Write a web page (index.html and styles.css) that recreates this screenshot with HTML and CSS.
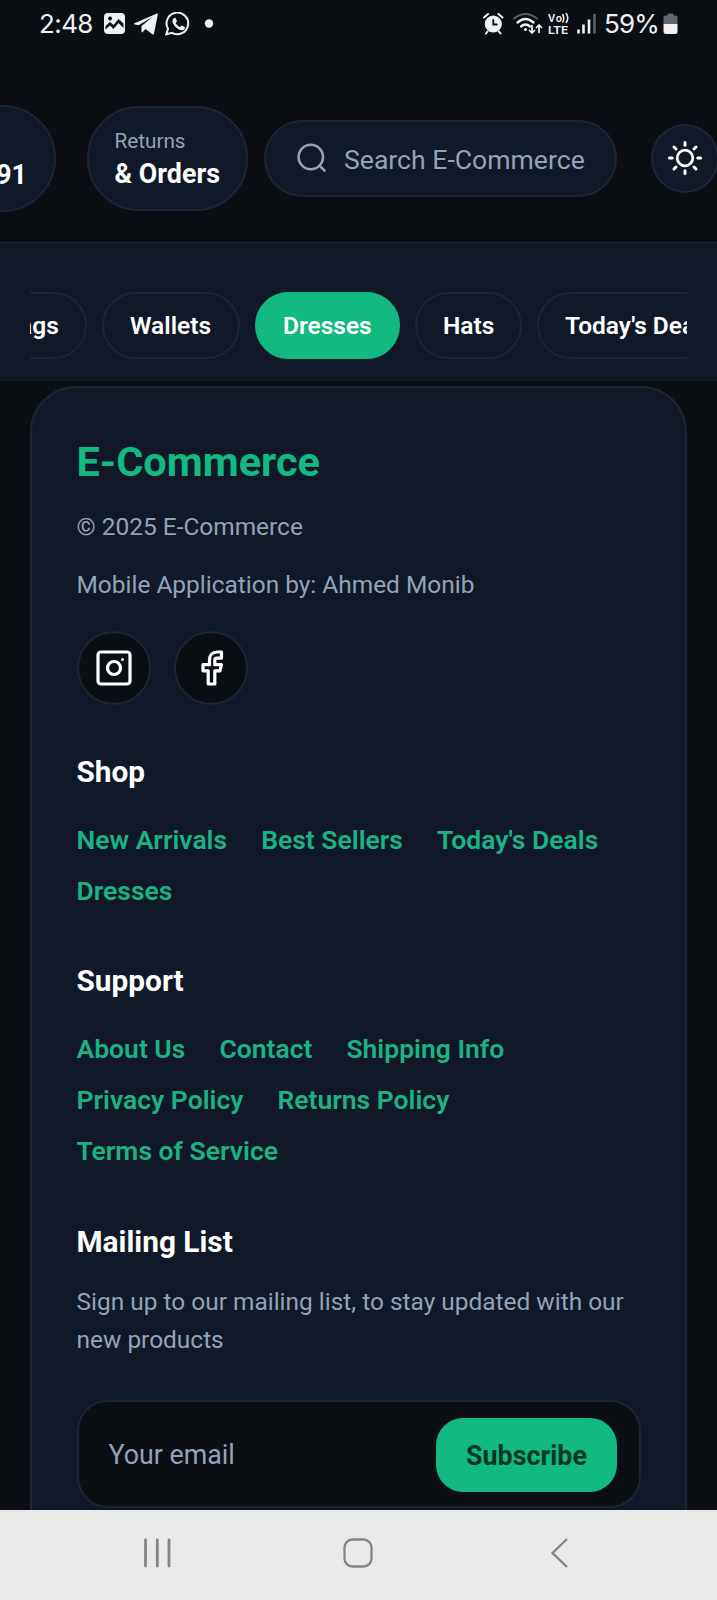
FILE: index.html
```html
<!DOCTYPE html>
<html lang="en">
<head>
<meta charset="utf-8">
<title>E-Commerce</title>
<link rel="stylesheet" href="styles.css">
</head>
<body>
<div class="screen">
  <div class="status">
    <span class="clock">2:48</span>
    <svg class="status-left" width="112" height="26" viewBox="0 0 112 26">
      <path fill="#f0f1f3" fill-rule="evenodd" d="M4 1h13a4 4 0 0 1 4 4v13a4 4 0 0 1-4 4H4a4 4 0 0 1-4-4V5a4 4 0 0 1 4-4ZM1.500 17.500 6 13.500l3.500 3.500 5-6 5 5v-4.500L14.500 7l-5 6L6 10l-4.500 4ZM6 4.500a2 2 0 1 0 .1 0Z"/>
      <path fill="#f0f1f3" d="M30 11.500 53 1.500q1-.3.800 1L50 21.500q-.4 1.500-1.800.700L41.500 17l-3.200 3.500-.8-.6V14L48.500 5 34.500 13.200 30 12.200Z"/>
      <path fill="none" stroke="#f0f1f3" stroke-width="2" d="M62.300 22.300 64 16.800a10.800 10.800 0 1 1 4 4Z"/>
      <path fill="#f0f1f3" d="M69.500 6.500c1-1 2-.8 2.400.2l1 2.400c.1.800-1 1.500-1.200 2 .8 1.800 2.200 3.100 4.200 4 .7-.2 1.300-1.700 2.100-1.500l2.700 1.300c.6 1.500-.7 3.100-2.400 3.400-3.200.6-9.500-4.500-9.800-8.700-.1-1.300.3-2.300 1-3.100Z"/>
      <circle cx="105" cy="11.500" r="4.200" fill="#f0f1f3"/>
    </svg>
    <svg class="status-right" width="114" height="26" viewBox="0 0 114 26">
      <g fill="none" stroke="#f0f1f3" stroke-width="2" stroke-linecap="round">
        <path d="M1 5.500 5 2M15.500 2l4 3.500M4.500 19.500 3 21.500M16 19.500l1.500 2"/>
        <circle cx="10.300" cy="12" r="7.600" fill="#f0f1f3"/>
        <path d="M10.300 8v4.500h3.500" stroke="#0b0e14" stroke-width="1.800"/>
        <path d="M31 6.500Q42.500-2.500 54 6.500" stroke="#5c6066"/>
        <path d="M34.500 10.500q8-7 16 0M38 14.500q4.500-3.800 9 0" stroke-width="2.400"/>
        <path d="M42.500 17.500v.1" stroke-width="3"/>
        <path d="M49 13.500v7M46.500 18.500l2.500 2.500 2.500-2.500M56 20.500v-7M53.500 15.500 56 13l2.500 2.500" stroke-width="1.700"/>
      </g>
      <text class="volte" x="65" y="9.800" textLength="14">Vo</text>
      <path d="M79.500 2q2.500 4.300 0 8.600M83 1q3.500 5 0 10" fill="none" stroke="#f0f1f3" stroke-width="1.500"/>
      <text class="volte" x="65" y="21.500" textLength="20" lengthAdjust="spacingAndGlyphs">LTE</text>
      <path d="M95.500 17.500v4M100.500 12.500v9M106 7.500v14" stroke="#f0f1f3" stroke-width="2.600"/>
      <path d="M111.500 2v19.500" stroke="#5c6066" stroke-width="2.600"/>
    </svg>
    <span class="battery">59%</span>
    <svg class="battery-icon" width="15" height="22" viewBox="0 0 15 22">
      <path fill="#63666b" d="M4.500 2.500v-1q0-1 1-1h4q1 0 1 1v1h2q2 0 2 2V11H.5V4.500q0-2 2-2Z"/>
      <path fill="#f0f1f3" d="M.5 11h14v7.500q0 2.500-2.500 2.500H3Q.5 21 .5 18.500Z"/>
    </svg>
  </div>

  <header class="header">
    <div class="pill deliver"><span class="small">&nbsp;</span><strong class="strong">91</strong></div>
    <div class="pill returns"><span class="small">Returns</span><strong class="strong">&amp; Orders</strong></div>
    <div class="search">
      <svg width="32" height="32" viewBox="0 0 32 32" fill="none" stroke="#94a3b8" stroke-width="2.600" stroke-linecap="round"><circle cx="14.800" cy="15" r="12.200"/><path d="m23.700 23.900 4.800 4.600"/></svg>
      <span>Search E-Commerce</span>
    </div>
    <div class="theme">
      <svg width="36" height="36" viewBox="0 0 36 36" fill="none" stroke="#fff" stroke-width="3" stroke-linecap="round"><circle cx="18" cy="18" r="7.800" stroke-width="2.700"/><path d="M18 2.400v2.800M18 30.800v2.800M2.400 18h2.800M30.800 18h2.800M7 7l2 2M27 27l2 2M7 29l2-2M27 9l2-2"/></svg>
    </div>
  </header>

  <nav class="categories">
    <div class="track">
      <a class="chip bags">Bags</a>
      <a class="chip wallets">Wallets</a>
      <a class="chip active">Dresses</a>
      <a class="chip hats">Hats</a>
      <a class="chip deals">Today's Deals</a>
    </div>
  </nav>

  <main class="card">
    <h1 class="brand">E-Commerce</h1>
    <p class="muted">© 2025 E-Commerce</p>
    <p class="muted author">Mobile Application by: Ahmed Monib</p>
    <div class="socials">
      <a class="social"><svg width="38" height="38" viewBox="0 0 38 38" fill="none" stroke="#fff" stroke-width="3.200"><rect x="3" y="3" width="32" height="32" rx="3"/><circle cx="19" cy="19" r="6.500"/><circle cx="27.500" cy="10.500" r="1.500" fill="#fff" stroke="none"/></svg></a>
      <a class="social"><svg width="38" height="38" viewBox="0 0 38 38" fill="none" stroke="#fff" stroke-width="3.200" stroke-linejoin="round"><path d="M29.500 3h-4.300c-4.500 0-7.700 3.200-7.700 7.700v5H11v6.100h5.200V35h6.600V21.800h5.100l1.600-6.100h-6.700v-4.500c0-1.300.8-2.100 2.100-2.100h4.600Z"/></svg></a>
    </div>

    <h2 class="heading">Shop</h2>
    <div class="links">
      <a>New Arrivals</a><a>Best Sellers</a><a>Today's Deals</a><a>Dresses</a>
    </div>

    <h2 class="heading">Support</h2>
    <div class="links">
      <a>About Us</a><a>Contact</a><a>Shipping Info</a><a>Privacy Policy</a><a>Returns Policy</a><a>Terms of Service</a>
    </div>

    <h2 class="heading mailing">Mailing List</h2>
    <p class="muted signup">Sign up to our mailing list, to stay updated with our new products</p>
    <div class="field"><span>Your email</span><button class="subscribe">Subscribe</button></div>
  </main>

  <div class="sysnav">
    <svg width="30" height="30" viewBox="0 0 30 30" stroke="#858585" stroke-width="2.800" stroke-linecap="round"><path d="M3.500 2v26M15.300 2v26M27 2v26"/></svg>
    <svg width="30" height="30" viewBox="0 0 30 30" fill="none" stroke="#858585" stroke-width="2.300"><rect x="1.500" y="1.500" width="27" height="27" rx="8"/></svg>
    <svg width="30" height="30" viewBox="0 0 30 30" fill="none" stroke="#858585" stroke-width="2.300"><path d="M24 1 9.500 15 24 29"/></svg>
  </div>
</div>
</body>
</html>
```

FILE: styles.css
```css
* { box-sizing: border-box; }

body {
  margin: 0;
  background: #0b0e12;
  font-family: Roboto, "Liberation Sans", sans-serif;
  color: #fff;
}

h1, h2, p { margin: 0; }

.screen {
  position: relative;
  width: 717px;
  height: 1600px;
  overflow: hidden;
  background: #0b0e12;
}

/* Status bar */
.status {
  display: flex;
  height: 48px;
  padding: 12px 39px 0 39px;
  color: #f0f1f3;
}

.clock, .battery {
  font-family: Inter, Roboto, sans-serif;
  font-size: 26px;
  line-height: 23px;
  white-space: nowrap;
}

.clock { width: 65px; letter-spacing: -0.6px; }
.status-left { flex: none; }
.status-right { flex: none; margin-left: auto; }
.battery { width: 55px; margin-left: 7px; letter-spacing: -0.8px; }
.battery-icon { flex: none; margin-left: 4px; margin-top: 1px; }

.volte {
  font: 600 11px Roboto, sans-serif;
  fill: #f0f1f3;
}

/* Header */
.header {
  display: flex;
  align-items: center;
  height: 195px;
  padding-bottom: 30px;
  padding-top: 56px;
  border-bottom: 1px solid #1d2430;
}

.pill, .search, .theme {
  flex: none;
  background: #111827;
  border: 2px solid #1f2633;
}

.pill {
  display: flex;
  flex-direction: column;
  height: 105px;
  padding: 19.500px 26px 0;
  border-radius: 52px;
}

.deliver {
  width: 156px;
  height: 107px;
  margin-left: -100px;
  padding: 21px 27px 0;
  align-items: flex-end;
  border-radius: 54px;
}

.returns { width: 161px; margin-left: 30.500px; }
.small { font-size: 20.700px; line-height: 28px; color: #94a3b8; }
.strong { font-size: 26.800px; line-height: 38px; font-weight: 700; white-space: nowrap; }

.search {
  display: flex;
  align-items: center;
  width: 353px;
  height: 77px;
  margin-left: 16.500px;
  padding-left: 30px;
  border-radius: 39px;
  font-size: 26.600px;
  color: #94a3b8;
  white-space: nowrap;
}

.search span { margin-left: 16px; padding-top: 3px; }

.theme {
  display: flex;
  align-items: center;
  justify-content: center;
  width: 68px;
  height: 69px;
  margin-left: 34px;
  border-radius: 50%;
}

/* Category chips */
.categories {
  height: 138px;
  padding: 49px 30px 0;
  background: #111827;
}

.track {
  display: flex;
  gap: 15px;
  overflow: hidden;
}

.chip {
  flex: none;
  height: 67px;
  padding: 0 26px;
  border: 2px solid #1f2633;
  border-radius: 34px;
  font-size: 24.500px;
  line-height: 64px;
  font-weight: 600;
  white-space: nowrap;
}

.bags { width: 114px; margin-left: -57px; padding-left: 28.500px; }
.wallets { width: 138px; }
.active { width: 145px; background: #12b981; border-color: #12b981; }
.hats { width: 107px; }
.deals { width: 208px; }

/* Footer card */
.card {
  height: 1169px;
  margin: 5px 30px 0;
  padding: 44px 44px 0 44.500px;
  background: #111827;
  border: 2px solid #1f2633;
  border-radius: 46px;
}

.brand {
  font-size: 41.500px;
  line-height: 60px;
  font-weight: 700;
  color: #12b981;
}

.muted {
  font-size: 24.450px;
  line-height: 38px;
  color: #94a3b8;
}

.brand + .muted { margin-top: 16px; }
.author { margin-top: 20px; }

.socials { display: flex; gap: 23px; margin-top: 27px; }

.social {
  display: flex;
  align-items: center;
  justify-content: center;
  width: 74px;
  height: 74px;
  border: 2px solid #1f2633;
  border-radius: 50%;
  background: #0b0e12;
}

.heading {
  margin-top: 50.500px;
  font-size: 29.800px;
  line-height: 42px;
  font-weight: 700;
}

.socials + .heading { margin-top: 46px; }
.mailing { margin-top: 52.500px; }

.links {
  display: flex;
  flex-wrap: wrap;
  column-gap: 34px;
  row-gap: 15px;
  margin-top: 29px;
  font-size: 26.500px;
  line-height: 36px;
  font-weight: 600;
  color: #1bb384;
}

.signup { margin-top: 20px; }

.field {
  display: flex;
  align-items: center;
  justify-content: space-between;
  height: 108px;
  margin-top: 41px;
  padding: 2px 22px 0 30px;
  border: 2px solid #1f2633;
  border-radius: 31px;
  background: #0b0e12;
  font-size: 26.800px;
  color: #94a3b8;
}

.subscribe {
  width: 181px;
  height: 74px;
  padding: 2px 0 0;
  border: 0;
  border-radius: 27px;
  background: #12b981;
  font: 700 26.800px Roboto, sans-serif;
  color: #043825;
}

/* System navigation, translucent over the page */
.sysnav {
  position: absolute;
  left: 0;
  right: 0;
  bottom: 0;
  display: flex;
  justify-content: space-between;
  height: 90px;
  padding: 28px 144px 0 142px;
  background: rgba(243, 243, 243, 0.955);
}
```
